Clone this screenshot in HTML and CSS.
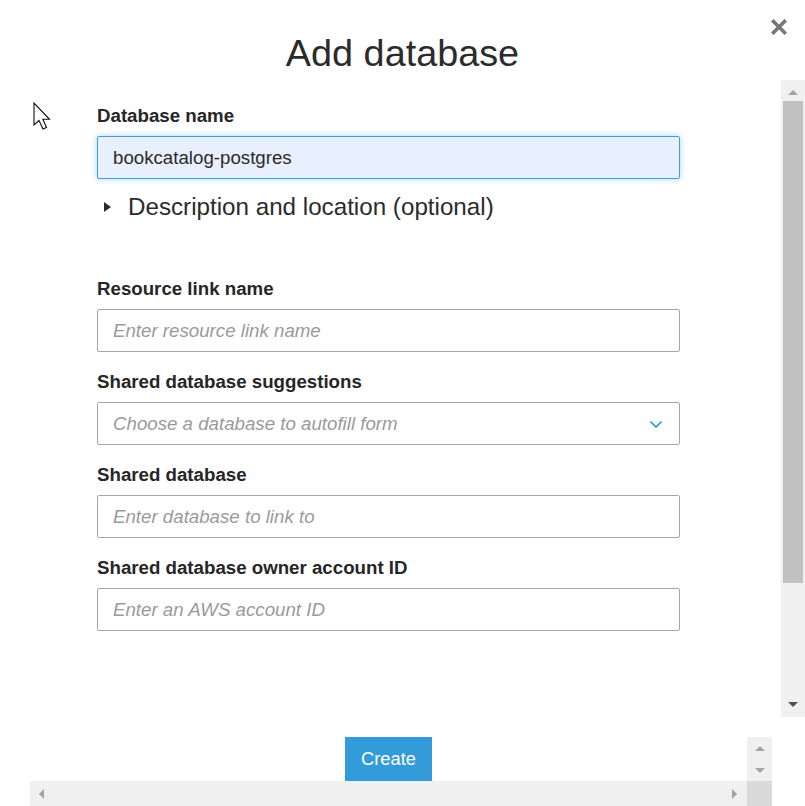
FILE: index.html
```html
<!DOCTYPE html>
<html>
<head>
<meta charset="utf-8">
<link rel="stylesheet" href="styles.css">
</head>
<body>
<div class="dialog">
  <header class="header">
    <h1 class="title">Add database</h1>
    <button class="close" aria-label="Close">
      <svg width="16" height="16" viewBox="0 0 16 16"><path d="M2.5 2.5 L13.5 13.5 M13.5 2.5 L2.5 13.5" stroke="#777" stroke-width="3.6" stroke-linecap="square"/></svg>
    </button>
  </header>
  <div class="main">
    <div class="content">
      <div class="field">
        <label class="label">Database name</label>
        <div class="input focused"><span class="value">bookcatalog-postgres</span></div>
      </div>
      <div class="expander">
        <span class="caret"></span>
        <span class="expander-text">Description and location (optional)</span>
      </div>
      <div class="field">
        <label class="label">Resource link name</label>
        <div class="input"><span class="placeholder">Enter resource link name</span></div>
      </div>
      <div class="field">
        <label class="label">Shared database suggestions</label>
        <div class="input select"><span class="placeholder">Choose a database to autofill form</span>
          <svg class="chev" width="14" height="9" viewBox="0 0 14 9"><path d="M1.5 1.5 L7 7 L12.5 1.5" fill="none" stroke="#2a96d6" stroke-width="1.6"/></svg>
        </div>
      </div>
      <div class="field">
        <label class="label">Shared database</label>
        <div class="input"><span class="placeholder">Enter database to link to</span></div>
      </div>
      <div class="field">
        <label class="label">Shared database owner account ID</label>
        <div class="input"><span class="placeholder">Enter an AWS account ID</span></div>
      </div>
    </div>
    <div class="vscroll">
      <span class="arr up light"></span>
      <div class="thumb-track"><div class="thumb"></div></div>
      <span class="arr down dark"></span>
    </div>
  </div>
  <footer class="footer">
    <div class="frame">
      <div class="btn-cell"><button class="create">Create</button></div>
      <div class="mini-v">
        <span class="arr up light"></span>
        <span class="arr down light"></span>
      </div>
      <div class="hscroll">
        <span class="arr left light"></span>
        <span class="arr right light"></span>
      </div>
      <div class="corner"></div>
    </div>
  </footer>
  <svg class="cursor" width="20" height="30" viewBox="0 0 20 30"><path d="M1 1 L1 23 L6 18.5 L10 27 L13.5 25.5 L9.8 17.3 L16.5 17.3 Z" fill="#fff" stroke="#111" stroke-width="1.1" stroke-linejoin="miter"/></svg>
</div>
</body>
</html>
```
FILE: styles.css
```css
* { box-sizing: border-box; }
html, body { margin: 0; padding: 0; background: #fff; }
body { font-family: "Liberation Sans", Arial, sans-serif; color: #333; }

.dialog {
  position: relative;
  width: 805px;
  height: 806px;
  display: flex;
  flex-direction: column;
  overflow: hidden;
}

.header {
  height: 80px;
  padding-top: 32px;
  text-align: center;
  position: relative;
}
.title {
  margin: 0;
  font-size: 37.8px;
  font-weight: normal;
  line-height: 42px;
  color: #2b2b2b;
}
.close {
  position: absolute;
  top: 19px;
  right: 18px;
  width: 16px;
  height: 16px;
  padding: 0;
  border: 0;
  background: none;
  line-height: 0;
}

.main {
  height: 637px;
  display: flex;
}
.content {
  flex: 1;
  padding: 25px 0 0 97px;
  overflow: hidden;
}
.field { width: 583px; margin-bottom: 19px; }
.label {
  display: block;
  font-size: 18.7px;
  font-weight: bold;
  line-height: 22px;
  color: #262626;
  margin-bottom: 9px;
}
.input {
  height: 43px;
  border: 1px solid #a6a6a6;
  border-radius: 2px;
  padding: 0 15px;
  display: flex;
  align-items: center;
  font-size: 18.7px;
}
.input.focused {
  background: #e8f0fd;
  border-color: #3c9fe0;
  box-shadow: 0 0 6px rgba(60, 159, 224, 0.45);
}
.value { color: #2a2a2a; }
.placeholder { color: #9a9a9a; font-style: italic; }
.select { justify-content: space-between; padding-right: 16px; }
.chev { display: block; margin-top: 2px; }

.expander {
  display: flex;
  align-items: center;
  margin-top: -5px;
  margin-bottom: 57px;
  height: 28px;
}
.caret {
  width: 0; height: 0;
  border-top: 5.5px solid transparent;
  border-bottom: 5.5px solid transparent;
  border-left: 7px solid #2b2b2b;
  margin-left: 7px;
  margin-right: 17px;
}
.expander-text { font-size: 24.2px; color: #2b2b2b; line-height: 28px; }

.vscroll {
  width: 24px;
  background: #f0f0f0;
  display: flex;
  flex-direction: column;
  align-items: center;
}
.thumb-track { flex: 1; width: 100%; padding: 0 2px; }
.thumb { height: 482px; background: #c1c1c1; margin-top: 0; }
.vscroll .up { margin: 10px 0 6px; }
.vscroll .down { margin: 0 0 10px; }

.arr { display: block; width: 0; height: 0; }
.arr.up { border-left: 5px solid transparent; border-right: 5px solid transparent; border-bottom: 5px solid #a3a3a3; }
.arr.down { border-left: 5px solid transparent; border-right: 5px solid transparent; border-top: 5px solid #a3a3a3; }
.arr.down.dark { border-top-color: #505050; }
.arr.left { border-top: 5px solid transparent; border-bottom: 5px solid transparent; border-right: 5px solid #a3a3a3; }
.arr.right { border-top: 5px solid transparent; border-bottom: 5px solid transparent; border-left: 5px solid #a3a3a3; }

.footer { padding-top: 20px; }
.frame {
  margin-left: 30px;
  width: 742px;
  display: grid;
  grid-template-columns: 717px 25px;
  grid-template-rows: 44px 25px;
}
.btn-cell { display: flex; justify-content: center; }
.create {
  width: 87px;
  height: 44px;
  border: 0;
  background: #339bd9;
  color: #fff;
  font-family: "Liberation Sans", Arial, sans-serif;
  font-size: 18.3px;
  padding: 0;
}
.mini-v {
  background: #f0f0f0;
  display: flex;
  flex-direction: column;
  align-items: center;
  justify-content: space-between;
  padding: 9px 0 8px;
}
.hscroll {
  background: #f0f0f0;
  display: flex;
  align-items: center;
  justify-content: space-between;
  padding: 0 10px 0 9px;
}
.corner { background: #dadada; }

.cursor {
  position: absolute;
  left: 33px;
  top: 102px;
}
```
